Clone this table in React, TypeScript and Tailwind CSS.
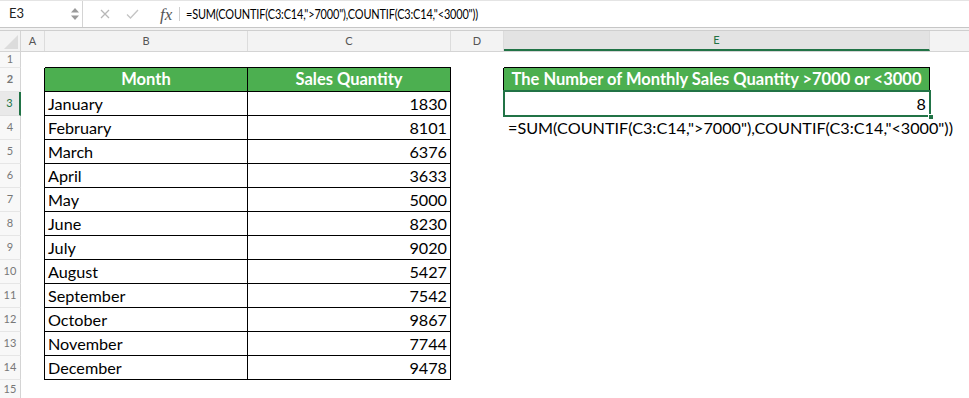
import React from "react";

const months: [string, number][] = [
  ["January", 1830],
  ["February", 8101],
  ["March", 6376],
  ["April", 3633],
  ["May", 5000],
  ["June", 8230],
  ["July", 9020],
  ["August", 5427],
  ["September", 7542],
  ["October", 9867],
  ["November", 7744],
  ["December", 9478],
];

const FORMULA = '=SUM(COUNTIF(C3:C14,">7000"),COUNTIF(C3:C14,"<3000"))';

function RowHeader({ n, selected }: { n: number; selected?: boolean }) {
  return (
    <div
      className={
        selected
          ? "w-[21px] shrink-0 h-full flex items-center justify-center bg-[#e9e9e9] border-r-2 border-r-[#217346] border-b border-b-[#e0e0e0] text-[#217346] text-[11px]"
          : "w-[21px] shrink-0 h-full flex items-center justify-center bg-[#f8f8f8] border-r border-r-[#d4d4d4] border-b border-b-[#e6e6e6] text-[#777] text-[11px]"
      }
    >
      {n}
    </div>
  );
}

export default function App() {
  return (
    <div
      className="w-[969px] h-[398px] overflow-hidden bg-white text-black"
      style={{ fontFamily: "Lato, 'Noto Sans', sans-serif" }}
    >
      {/* formula bar */}
      <div className="h-[28px] flex items-stretch bg-white border-t border-t-[#e4e4e4] border-b border-b-[#c6c6c6]">
        <div className="w-[83px] shrink-0 flex items-center border-r border-r-[#d4d4d4]">
          <span className="pl-[9px] text-[13px] text-[#222] flex-1">E3</span>
          <svg width="10" height="14" viewBox="0 0 10 14" className="mr-[2px]">
            <path d="M5 1 L9 5.5 L1 5.5 Z" fill="#9a9a9a" />
            <path d="M5 13 L9 8.5 L1 8.5 Z" fill="#9a9a9a" />
          </svg>
        </div>
        <div className="flex items-center pl-[17px] gap-[16px]">
          <svg width="10" height="10" viewBox="0 0 10 10">
            <path d="M1 1 L9 9 M9 1 L1 9" stroke="#b8b8b8" strokeWidth="1.3" />
          </svg>
          <svg width="13" height="10" viewBox="0 0 13 10">
            <path d="M1 5.5 L4.5 9 L12 1" stroke="#c4c4c4" strokeWidth="1.3" fill="none" />
          </svg>
          <span
            className="ml-[5px] text-[17px] italic text-[#555] leading-none"
            style={{ fontFamily: "'Liberation Serif', serif" }}
          >
            fx
          </span>
        </div>
        <div className="flex items-center ml-[7px]">
          <div className="w-px h-[14px] bg-[#cfcfcf]" />
          <span className="ml-[6px] text-[13.5px] text-black whitespace-nowrap inline-block origin-left scale-x-[0.81] tracking-[-0.2px]">
            {FORMULA}
          </span>
        </div>
      </div>
      <div className="h-[3px] bg-[#f2f2f2] border-b border-b-[#cfcfcf]" />

      {/* column headers */}
      <div className="h-[21px] flex bg-[#f3f3f3] text-[11px] text-[#555] border-b border-b-[#d4d4d4]">
        <div className="w-[21px] shrink-0 relative border-r border-r-[#d4d4d4]">
          <svg width="14" height="14" viewBox="0 0 14 14" className="absolute right-[2px] bottom-[2px]">
            <path d="M14 0 L14 14 L0 14 Z" fill="#dcdcdc" />
          </svg>
        </div>
        <div className="w-[24px] shrink-0 flex items-center justify-center border-r border-r-[#dcdcdc]">A</div>
        <div className="w-[203px] shrink-0 flex items-center justify-center border-r border-r-[#dcdcdc]">B</div>
        <div className="w-[203px] shrink-0 flex items-center justify-center border-r border-r-[#dcdcdc]">C</div>
        <div className="w-[53px] shrink-0 flex items-center justify-center border-r border-r-[#dcdcdc]">D</div>
        <div className="w-[426px] shrink-0 flex items-center justify-center bg-[#e3e3e3] text-[#217346] border-b-2 border-b-[#217346] border-r border-r-[#dcdcdc]">
          E
        </div>
        <div className="flex-1" />
      </div>

      {/* row 1 */}
      <div className="h-[16px] flex">
        <RowHeader n={1} />
        <div className="w-[24px] shrink-0" />
        <div className="w-[203px] shrink-0 border-b border-black" />
        <div className="w-[203px] shrink-0 border-b border-black" />
        <div className="w-[53px] shrink-0" />
        <div className="w-[426px] shrink-0 border-b border-black" />
        <div className="flex-1" />
      </div>

      {/* row 2 */}
      <div className="h-[24px] flex text-[16.5px] font-bold text-white">
        <RowHeader n={2} />
        <div className="w-[24px] shrink-0 border-r border-black" />
        <div className="w-[203px] shrink-0 flex items-center justify-center bg-[#4caf50] border-r border-b border-black">
          Month
        </div>
        <div className="w-[203px] shrink-0 flex items-center justify-center bg-[#4caf50] border-r border-b border-black">
          Sales Quantity
        </div>
        <div className="w-[53px] shrink-0 border-r border-black" />
        <div className="w-[426px] shrink-0 flex items-center justify-center bg-[#4caf50] border-r border-b border-black whitespace-nowrap">
          The Number of Monthly Sales Quantity &gt;7000 or &lt;3000
        </div>
        <div className="flex-1" />
      </div>

      {/* rows 3-14 */}
      {months.map(([m, q], i) => {
        const n = i + 3;
        return (
          <div key={m} className="h-[24px] flex text-[16.2px]">
            <RowHeader n={n} selected={n === 3} />
            <div className="w-[24px] shrink-0 border-r border-black" />
            <div className="w-[203px] shrink-0 flex items-center pt-[1px] pl-[3px] border-r border-b border-black">
              {m}
            </div>
            <div className="w-[203px] shrink-0 flex items-center justify-end pt-[1px] pr-[3px] border-r border-b border-black">
              {q}
            </div>
            <div className="w-[53px] shrink-0" />
            {n === 3 ? (
              <div className="w-[426px] shrink-0 relative flex items-center justify-end pt-[1px] pr-[4px]">
                8
                <div className="absolute left-[-1px] top-[-2px] right-[-1px] bottom-[-1px] border-2 border-[#217346]" />
                <div className="absolute right-[-4px] bottom-[-4px] w-[6px] h-[6px] bg-[#217346] border border-white" />
              </div>
            ) : n === 4 ? (
              <div className="w-[426px] shrink-0 flex items-center pt-[1px] pl-[4px] whitespace-nowrap overflow-visible">
                {FORMULA}
              </div>
            ) : (
              <div className="w-[426px] shrink-0" />
            )}
            <div className="flex-1" />
          </div>
        );
      })}

      {/* row 15 */}
      <div className="h-[20px] flex">
        <RowHeader n={15} />
        <div className="flex-1" />
      </div>
    </div>
  );
}
